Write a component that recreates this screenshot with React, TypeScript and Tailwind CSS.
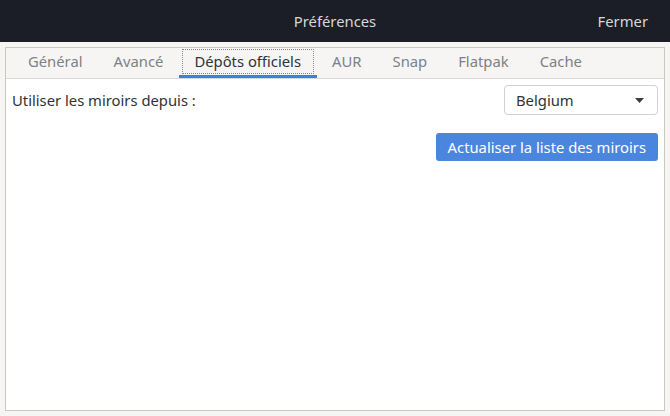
const tabs = ["Général", "Avancé", "Dépôts officiels", "AUR", "Snap", "Flatpak", "Cache"];
const activeTab = "Dépôts officiels";

export default function App() {
  return (
    <div className="flex h-[416px] w-[670px] flex-col bg-[#f6f5f4] font-['Noto_Sans',sans-serif] text-[14.8px] text-[#2e3436]">
      {/* header bar */}
      <header className="relative flex h-[42px] shrink-0 items-center justify-center bg-[#1b1e26]">
        <span className="text-[#d6d7d9]">Préférences</span>
        <button className="absolute right-[22px] top-[10px] text-[#d6d7d9]">Fermer</button>
      </header>

      <div className="flex flex-1 flex-col px-[5px] pb-[5px] pt-[5px]">
        <div className="flex flex-1 flex-col border border-[#cdc7c2]">
          {/* tabs */}
          <nav className="flex h-[31px] shrink-0 items-stretch border-b border-[#dcd8d5] bg-[#f6f5f4] pl-[6.5px]">
            {tabs.map((t) => {
              const active = t === activeTab;
              return (
                <div
                  key={t}
                  className={
                    active
                      ? "flex items-center border-b-[3px] border-[#3584e4] px-[3px] pt-[0px]"
                      : "flex items-center border-b-[3px] border-transparent px-[3px] pt-[0px]"
                  }
                >
                  <span
                    className={
                      active
                        ? "border border-dotted border-[#888] px-[11.5px] py-[0px] text-[#2e3436]"
                        : "border border-transparent px-[11.5px] py-[0px] text-[#7d8186]"
                    }
                  >
                    {t}
                  </span>
                </div>
              );
            })}
          </nav>

          {/* page */}
          <div className="flex flex-1 flex-col bg-white px-[6px] pt-[6px]">
            <div className="flex items-center justify-between">
              <span className="text-[#2e3436]">Utiliser les miroirs depuis :</span>
              <div className="flex h-[30px] w-[154px] items-center justify-between rounded-[4px] border border-[#d4d0cc] bg-white pl-[11px] pr-[13px]">
                <span>Belgium</span>
                <svg width="9" height="5" viewBox="0 0 9 5">
                  <path d="M0 0 L9 0 L4.5 5 Z" fill="#3a3d40" />
                </svg>
              </div>
            </div>
            <div className="mt-[18px] flex justify-end">
              <button className="h-[28px] rounded-[3px] bg-[#4a86de] px-[12px] text-white">
                Actualiser la liste des miroirs
              </button>
            </div>
          </div>
        </div>
      </div>
    </div>
  );
}
